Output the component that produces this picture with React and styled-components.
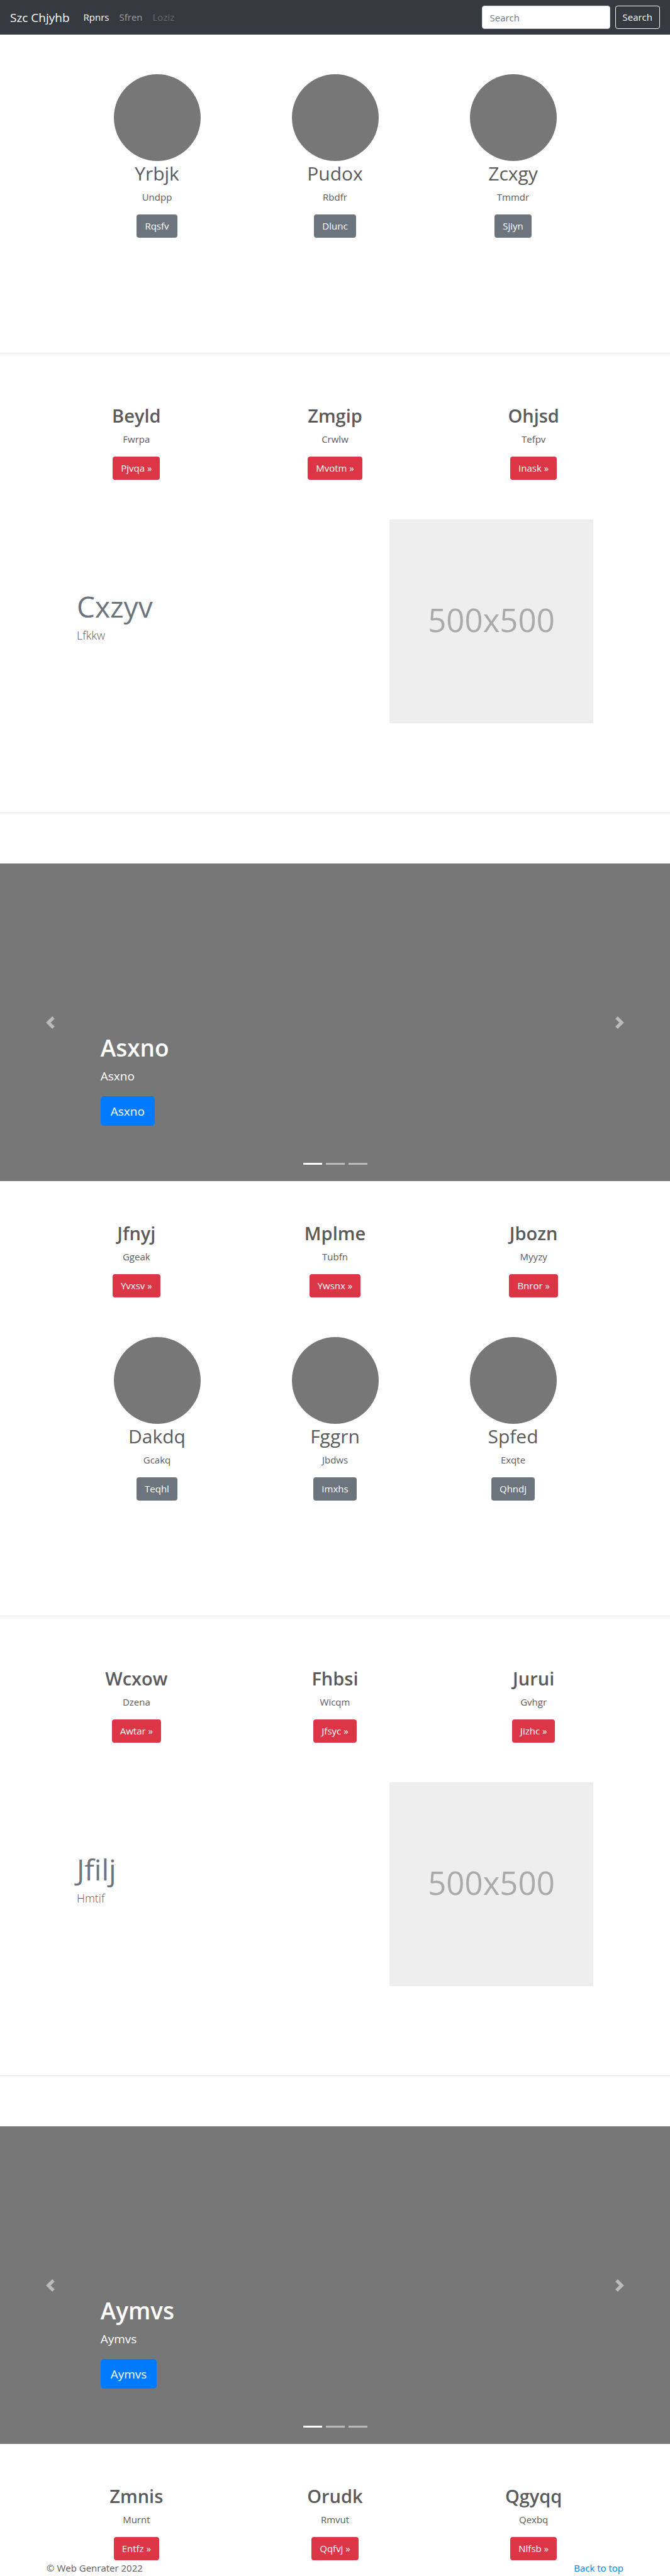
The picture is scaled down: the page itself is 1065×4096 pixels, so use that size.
import React from "react";
import styled, { createGlobalStyle } from "styled-components";

const GlobalStyle = createGlobalStyle`
  *, *::before, *::after { box-sizing: border-box; }
  body {
    margin: 0;
    background: #fff;
    color: #5a5a5a;
    font-family: "Open Sans", "Noto Sans", sans-serif;
    font-size: 15px;
    line-height: 23px;
  }
  h1, h2, p, ul { margin: 0; padding: 0; }
`;

const Navbar = styled.nav`
  display: flex;
  align-items: center;
  min-height: 55px;
  padding: 8px 16px;
  background: #343a40;
`;

const Brand = styled.a`
  margin-right: 14px;
  color: #fff;
  font-size: 19px;
  line-height: 30px;
  text-decoration: none;
`;

const NavList = styled.ul`
  display: flex;
  flex: 1;
  list-style: none;
`;

const NavLink = styled.a`
  display: block;
  padding: 8px;
  color: ${({ $tone }) =>
    ({ active: "#fff", normal: "rgba(255,255,255,.5)", disabled: "rgba(255,255,255,.25)" })[$tone]};
  text-decoration: none;
`;

const SearchForm = styled.form`
  display: flex;
  gap: 8px;
`;

const SearchInput = styled.input`
  width: 204px;
  height: 37px;
  padding: 6px 12px;
  border: 1px solid #ced4da;
  border-radius: 4px;
  background: #fff;
  color: #495057;
  font: inherit;
  &::placeholder { color: #6c757d; opacity: 1; }
`;

const SearchButton = styled.button`
  height: 37px;
  padding: 0 11px;
  border: 1px solid #f8f9fa;
  border-radius: 4px;
  background: transparent;
  color: #f8f9fa;
  font: inherit;
`;

const Columns = styled.section`
  display: grid;
  grid-template-columns: repeat(3, 1fr);
  width: 100%;
  max-width: ${({ $narrow }) => ($narrow ? "849px" : "947px")};
  margin: 0 auto;
`;

const ProfileBand = styled.div`
  padding: 63px 0 103px;
`;

const Column = styled.article`
  display: flex;
  flex-direction: column;
  align-items: center;
  text-align: center;
`;

const Avatar = styled.div`
  width: 138px;
  height: 138px;
  margin-bottom: 1px;
  border-radius: 50%;
  background: #777;
`;

const ColumnTitle = styled.h2`
  margin-bottom: 7px;
  font-size: ${({ $strong }) => ($strong ? "29px" : "30px")};
  font-weight: ${({ $strong }) => ($strong ? 600 : 400)};
  line-height: 38px;
`;

const ColumnText = styled.p`
  margin-bottom: 16px;
`;

const ActionLink = styled.a`
  padding: 7px 13px;
  border-radius: 4px;
  background: ${({ $variant }) => ($variant === "danger" ? "#dc3545" : "#6c757d")};
  color: #fff;
  text-decoration: none;
`;

const Divider = styled.hr`
  height: 1px;
  margin: 80px 0;
  border: 0;
  background: #e5e5e5;
`;

const Featurette = styled.section`
  display: flex;
  align-items: center;
  justify-content: space-between;
  max-width: 821px;
  margin: 0 auto;
  padding: 63px 0 62px;
`;

const FeatureTitle = styled.h2`
  margin-bottom: 5px;
  color: #6c757d;
  font-size: 46px;
  font-weight: 400;
  line-height: 54px;
`;

const FeatureText = styled.p`
  margin-bottom: 16px;
  font-size: 18px;
  font-weight: 300;
  line-height: 28px;
`;

const Placeholder = styled.div`
  display: grid;
  place-items: center;
  width: 324px;
  height: 324px;
  padding-bottom: 6px;
  background: #eee;
  color: #aaa;
  font-size: 51px;
  line-height: 60px;
`;

const CarouselBox = styled.section`
  position: relative;
  display: flex;
  align-items: flex-end;
  min-height: 505px;
  margin-bottom: 64px;
  padding: 0 15% 88px;
  background: #777;
  color: #fff;
`;

const HeroTitle = styled.h1`
  margin-bottom: 8px;
  font-size: 37px;
  font-weight: 600;
  line-height: 46px;
`;

const HeroText = styled.p`
  margin-bottom: 18px;
  font-size: 19px;
  line-height: 28px;
`;

const HeroButton = styled.a`
  display: inline-block;
  padding: 10px 16px 9px;
  border-radius: 5px;
  background: #007bff;
  color: #fff;
  font-size: 19px;
  line-height: 28px;
  text-decoration: none;
`;

const CarouselControl = styled.button`
  position: absolute;
  top: 0;
  bottom: 0;
  ${({ $side }) => $side}: 0;
  display: flex;
  align-items: center;
  justify-content: center;
  width: 15%;
  padding: 0;
  border: 0;
  background: none;
  color: #fff;
  opacity: 0.5;
`;

const Indicators = styled.div`
  position: absolute;
  right: 0;
  bottom: 26px;
  left: 0;
  display: flex;
  justify-content: center;
  gap: 6px;
`;

const Indicator = styled.button`
  width: 30px;
  height: 3px;
  padding: 0;
  border: 0;
  background: #fff;
  opacity: ${({ $active }) => ($active ? 1 : 0.5)};
`;

const Footer = styled.footer`
  display: flex;
  justify-content: space-between;
  max-width: 947px;
  margin: 0 auto;
  padding: 1px 15px;
`;

const FooterLink = styled.a`
  color: #007bff;
  text-decoration: none;
`;

function Profiles({ items }) {
  return (
    <ProfileBand>
      <Columns $narrow>
        {items.map(([title, text, action]) => (
          <Column key={title}>
            <Avatar />
            <ColumnTitle>{title}</ColumnTitle>
            <ColumnText>{text}</ColumnText>
            <ActionLink href="#">{action}</ActionLink>
          </Column>
        ))}
      </Columns>
    </ProfileBand>
  );
}

function Highlights({ items }) {
  return (
    <Columns>
      {items.map(([title, text, action]) => (
        <Column key={title}>
          <ColumnTitle $strong>{title}</ColumnTitle>
          <ColumnText>{text}</ColumnText>
          <ActionLink href="#" $variant="danger">{action} »</ActionLink>
        </Column>
      ))}
    </Columns>
  );
}

function Feature({ title, text }) {
  return (
    <Featurette>
      <div>
        <FeatureTitle>{title}</FeatureTitle>
        <FeatureText>{text}</FeatureText>
      </div>
      <Placeholder>500x500</Placeholder>
    </Featurette>
  );
}

function Chevron({ d }) {
  return (
    <svg width="20" height="20" viewBox="0 0 8 8" fill="currentColor" aria-hidden="true">
      <path d={d} />
    </svg>
  );
}

function Carousel({ label }) {
  return (
    <CarouselBox>
      <div>
        <HeroTitle>{label}</HeroTitle>
        <HeroText>{label}</HeroText>
        <HeroButton href="#">{label}</HeroButton>
      </div>
      <CarouselControl type="button" $side="left" aria-label="Previous">
        <Chevron d="M5.25 0l-4 4 4 4 1.5-1.5L4.25 4l2.5-2.5L5.25 0z" />
      </CarouselControl>
      <CarouselControl type="button" $side="right" aria-label="Next">
        <Chevron d="M2.75 0l-1.5 1.5L3.75 4l-2.5 2.5L2.75 8l4-4-4-4z" />
      </CarouselControl>
      <Indicators>
        {[0, 1, 2].map((n) => (
          <Indicator key={n} type="button" $active={n === 0} aria-label={`Slide ${n + 1}`} />
        ))}
      </Indicators>
    </CarouselBox>
  );
}

const groups = [
  {
    profiles: [["Yrbjk", "Undpp", "Rqsfv"], ["Pudox", "Rbdfr", "Dlunc"], ["Zcxgy", "Tmmdr", "Sjiyn"]],
    first: [["Beyld", "Fwrpa", "Pjvqa"], ["Zmgip", "Crwlw", "Mvotm"], ["Ohjsd", "Tefpv", "Inask"]],
    feature: ["Cxzyv", "Lfkkw"],
    hero: "Asxno",
    second: [["Jfnyj", "Ggeak", "Yvxsv"], ["Mplme", "Tubfn", "Ywsnx"], ["Jbozn", "Myyzy", "Bnror"]],
  },
  {
    profiles: [["Dakdq", "Gcakq", "Teqhl"], ["Fggrn", "Jbdws", "Imxhs"], ["Spfed", "Exqte", "Qhndj"]],
    first: [["Wcxow", "Dzena", "Awtar"], ["Fhbsi", "Wicqm", "Jfsyc"], ["Jurui", "Gvhgr", "Jizhc"]],
    feature: ["Jfilj", "Hmtif"],
    hero: "Aymvs",
    second: [["Zmnis", "Murnt", "Entfz"], ["Orudk", "Rmvut", "Qqfvj"], ["Qgyqq", "Qexbq", "Nlfsb"]],
  },
];

export default function App() {
  return (
    <>
      <GlobalStyle />
      <Navbar>
        <Brand href="#">Szc Chjyhb</Brand>
        <NavList>
          <li><NavLink href="#" $tone="active">Rpnrs</NavLink></li>
          <li><NavLink href="#" $tone="normal">Sfren</NavLink></li>
          <li><NavLink href="#" $tone="disabled" aria-disabled="true">Loziz</NavLink></li>
        </NavList>
        <SearchForm onSubmit={(e) => e.preventDefault()}>
          <SearchInput type="text" placeholder="Search" aria-label="Search" />
          <SearchButton type="submit">Search</SearchButton>
        </SearchForm>
      </Navbar>
      <main>
        {groups.map((group) => (
          <React.Fragment key={group.hero}>
            <Profiles items={group.profiles} />
            <Divider />
            <Highlights items={group.first} />
            <Feature title={group.feature[0]} text={group.feature[1]} />
            <Divider />
            <Carousel label={group.hero} />
            <Highlights items={group.second} />
          </React.Fragment>
        ))}
      </main>
      <Footer>
        <p>© Web Genrater 2022</p>
        <FooterLink href="#">Back to top</FooterLink>
      </Footer>
    </>
  );
}
